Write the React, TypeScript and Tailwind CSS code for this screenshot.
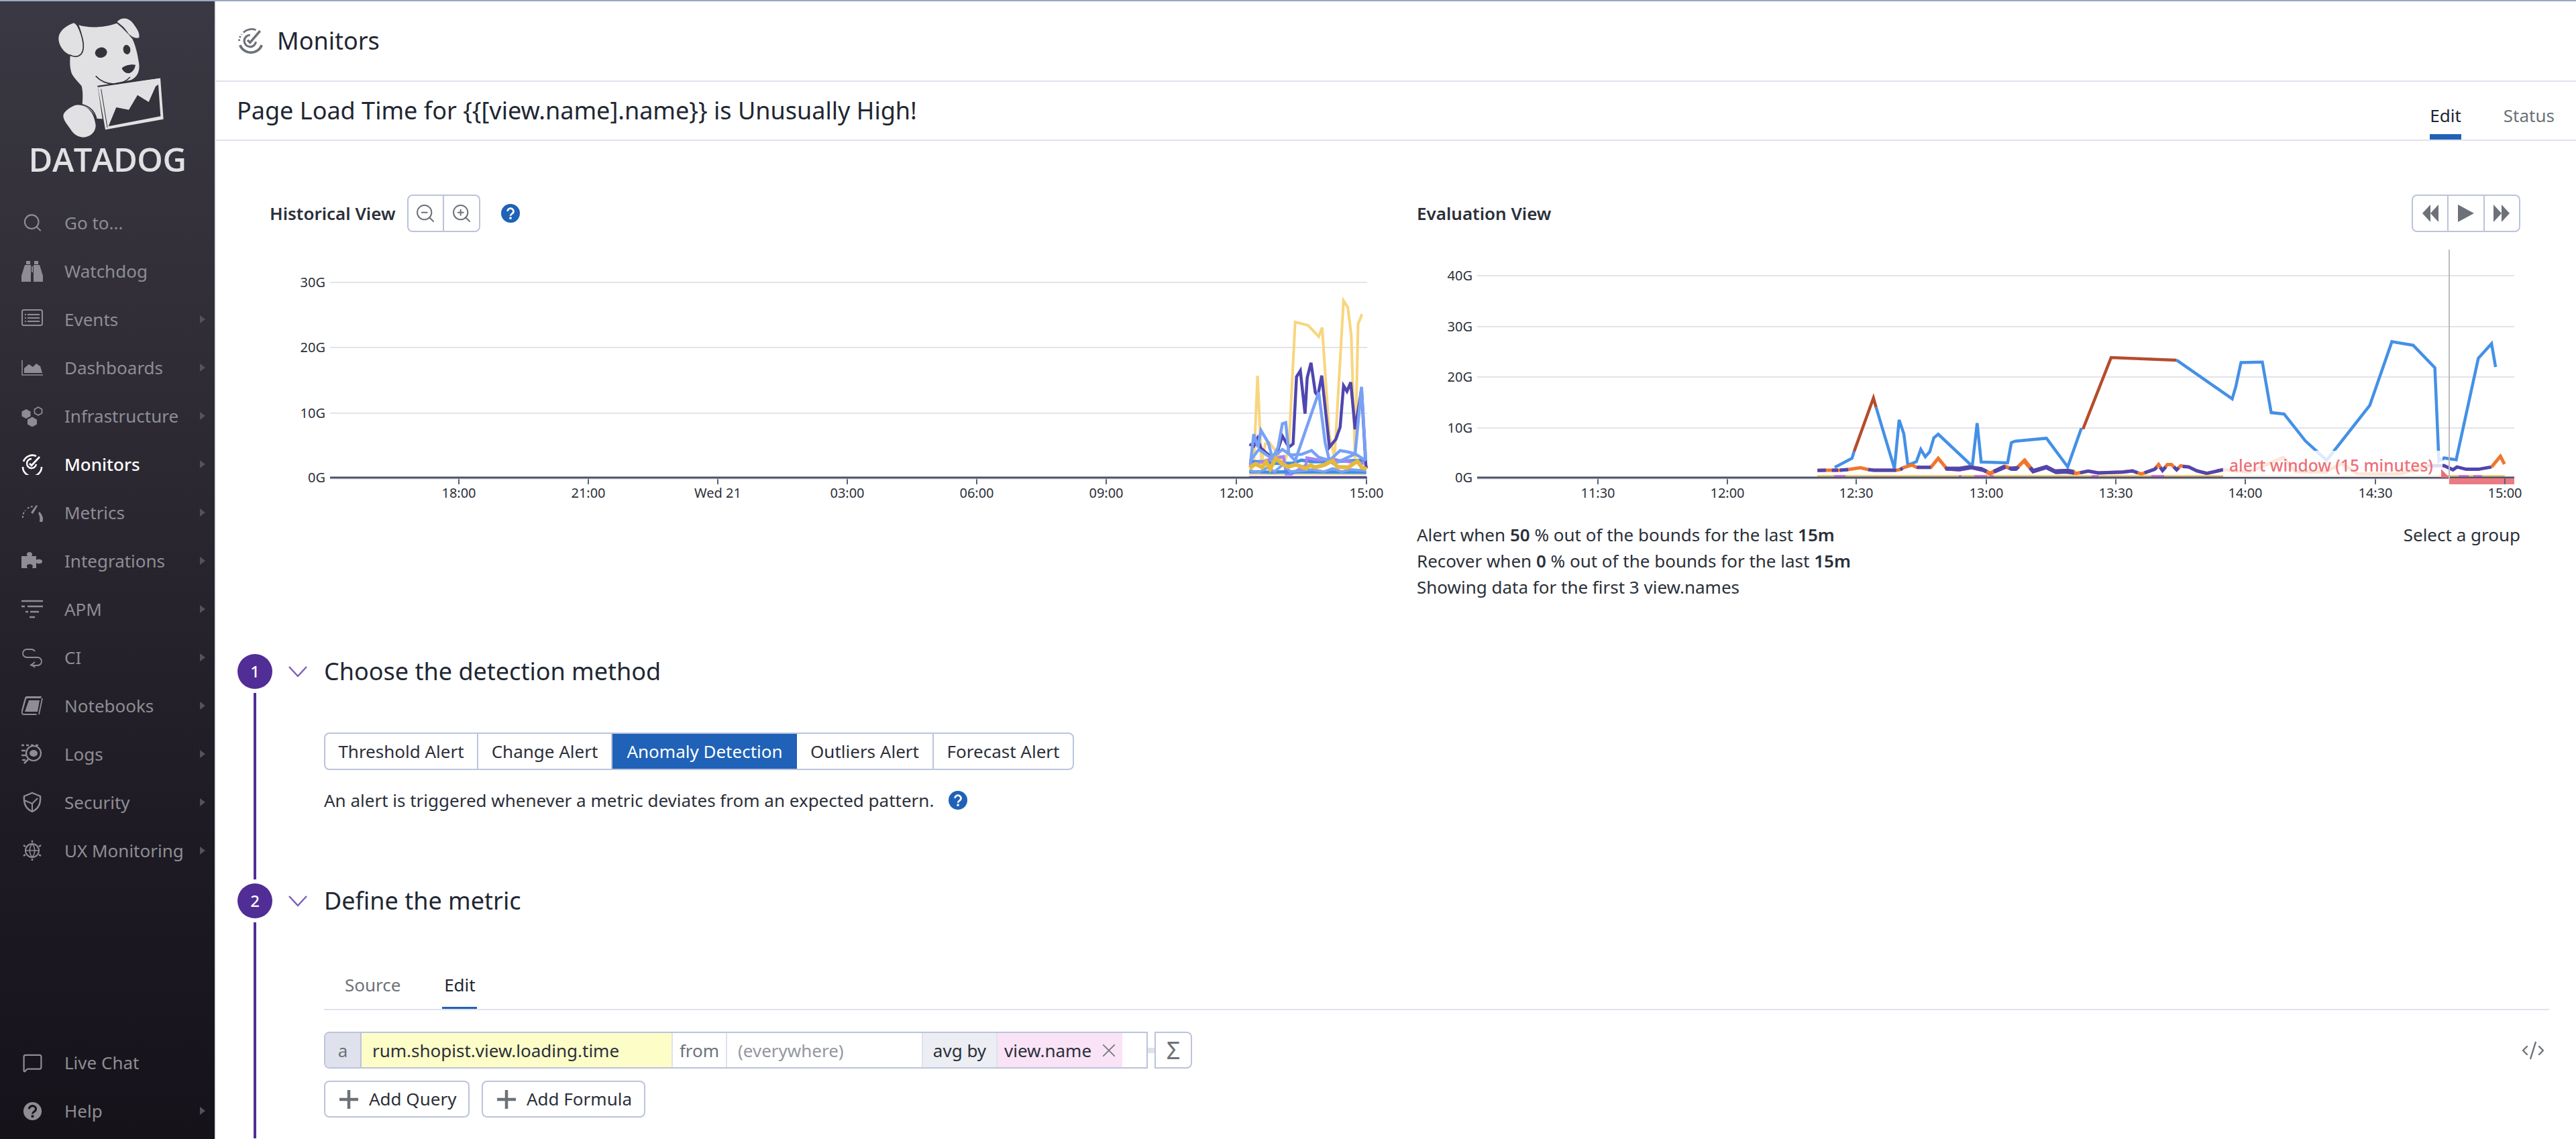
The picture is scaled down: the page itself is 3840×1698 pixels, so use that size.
import React from "react";
import { Search, ZoomIn, ZoomOut, Code2, MessageSquare } from "lucide-react";

type P = [number, number];
const z4 = (p: P[]) => p.map(([x, y]) => `${(1800 + x / 1.568).toFixed(1)},${(400 + y / 3).toFixed(1)}`).join(" ");
const z6 = (p: P[]) => p.map(([x, y]) => `${(1800 + x / 3).toFixed(1)},${(560 + y / 3).toFixed(1)}`).join(" ");
const z5 = (p: P[]) => p.map(([x, y]) => `${(2900 + x / 1.668).toFixed(1)},${(270 + y / 2.84).toFixed(1)}`).join(" ");
const z11 = (p: P[]) => p.map(([x, y]) => `${(2600 + x / 3).toFixed(1)},${(480 + y / 3).toFixed(1)}`).join(" ");

const Icon = ({ children }: { children: React.ReactNode }) => (
  <svg viewBox="0 0 32 32" width="32" height="32" fill="none" stroke="currentColor" strokeWidth="2">{children}</svg>
);

const icons: Record<string, React.ReactNode> = {
  goto: <Search size={32} strokeWidth={1.6} className="ml-[1px]" />,
  watchdog: (
    <Icon>
      <path fill="currentColor" stroke="none" d="M7 1h6v5H7zM19 1h6v5h-6zM5 7h9v25H0v-9zM18 7h9l5 16v9H18zM15 9h2v9h-2z" />
    </Icon>
  ),
  events: (
    <Icon>
      <rect x="1" y="2" width="30" height="23" rx="2.5" />
      <path d="M5 9h2M5 14h2M5 19h2M9 9h18M9 14h18M9 19h18" strokeWidth="1.8" />
    </Icon>
  ),
  dashboards: (
    <Icon>
      <path d="M1 5v22h31" strokeWidth="1.5" />
      <path fill="currentColor" stroke="none" d="M4 24v-7l7-6 6 4 5-5 6 4 3 10z" />
    </Icon>
  ),
  infra: (
    <Icon>
      <path fill="currentColor" stroke="none" d="M7 6l6.5 3.5v7L7 20 .5 16.5v-7zM16 17.5l7 4v7l-7 4-7-4v-7z" />
      <path d="M25 3l5.5 3v6L25 15l-5.5-3V6z" strokeWidth="1.7" />
    </Icon>
  ),
  monitors: (
    <Icon>
      <path d="M2 20A14 14 0 0 0 30 20" strokeWidth="2.6" />
      <path d="M3 12A14 14 0 0 1 22 4" strokeWidth="2.6" />
      <path d="M22 16a7 7 0 1 1-7-8" strokeWidth="2.4" />
      <path d="M12 15l3 3L27 5" strokeWidth="2.8" />
    </Icon>
  ),
  metrics: (
    <Icon>
      <path d="M2 24a14 14 0 0 1 4-11M9 10a14 14 0 0 1 8-3" strokeDasharray="3 2.4" strokeWidth="2" />
      <path fill="currentColor" stroke="none" d="M22 5l2 1-7 12-3-2zM27 15c3 3 5 7 5 11 0 1 0 3-1 4h-4c1-5 0-10-2-13z" />
    </Icon>
  ),
  integrations: (
    <Icon>
      <path fill="currentColor" stroke="none" d="M0 9h9c-2-2-1-6 3-6s5 4 3 6h7v6c2-2 9-2 9 2s-7 4-9 2v8h-6c2-4 0-6-4-6s-5 3-3 6H0z" />
    </Icon>
  ),
  apm: (
    <Icon>
      <path d="M0 4h32M0 12h5M9 12h23M6 20h4M13 20h13M12 28h8" strokeWidth="2.4" />
    </Icon>
  ),
  ci: (
    <Icon>
      <path d="M14 16H8a6 6 0 1 1 0-12h7a6 6 0 0 1 5 3M13 16h11a6 6 0 1 1 0 12H15l-2-1" strokeWidth="1.8" />
      <path d="M20 23l-5 4 5 4" strokeWidth="1.8" />
    </Icon>
  ),
  notebooks: (
    <Icon>
      <path fill="currentColor" stroke="none" d="M7 2h23l-1 3H9c-1 0-2 0-3 5L2 24c-1 3 0 4 2 4h18l1 2H4c-4 0-5-3-4-7L4 8c1-4 2-6 3-6zM11 8h16l-3 17H5z" />
      <path d="M31 5l-5 24" strokeWidth="1.8" />
    </Icon>
  ),
  logs: (
    <Icon>
      <path d="M0 3h4M7 3h4M14 3h4M21 3h4M0 11h6M0 18h7M1 25h5" strokeWidth="2.4" />
      <circle cx="18" cy="15" r="11" strokeWidth="2.2" />
      <ellipse cx="18" cy="15" rx="6" ry="5" fill="currentColor" stroke="none" />
      <path d="M10 24l-6 6" strokeWidth="2.6" />
    </Icon>
  ),
  security: (
    <Icon>
      <path d="M16 2l12 5c1 11-3 19-12 23C7 26 3 18 4 7z" strokeWidth="2.4" />
      <path d="M4 13l12 5 8-8M16 18v11" strokeWidth="2" />
    </Icon>
  ),
  ux: (
    <Icon>
      <circle cx="16" cy="16" r="10" strokeWidth="2" />
      <path d="M6 16h20M16 6c-5 6-5 14 0 20M16 6c5 6 5 14 0 20" strokeWidth="1.6" />
      <path d="M16 1v3M16 28v3M3 8l3 2M26 22l3 2M3 24l3-2M26 10l3-2" strokeWidth="2.4" />
    </Icon>
  ),
  chat: <MessageSquare size={33} strokeWidth={1.7} className="ml-[1px]" />,
  help: (
    <svg viewBox="0 0 32 32" width="29" height="29" className="ml-[1px]">
      <circle cx="16" cy="16" r="15" fill="currentColor" />
      <path d="M10.5 12.5a5.5 5 0 1 1 8.5 4c-2 1.3-3 2-3 4" fill="none" stroke="#17141c" strokeWidth="3.4" />
      <rect x="14" y="22.5" width="4" height="4" fill="#17141c" />
    </svg>
  ),
};

const NavRow = ({ icon, label, active, arrow = true }: { icon: string; label: string; active?: boolean; arrow?: boolean }) => (
  <div className={`flex h-[72px] items-center pl-[32px] pr-[14px] ${active ? "text-white" : "text-[#8f8d94]"}`}>
    <span className="flex h-[32px] w-[32px] shrink-0 items-center justify-center">{icons[icon]}</span>
    <span className={`ml-[32px] flex-1 text-[26px] leading-none ${active ? "font-medium" : ""}`}>{label}</span>
    {arrow && <span className="h-0 w-0 border-y-[6px] border-l-[8px] border-y-transparent border-l-[#55525c]" />}
  </div>
);

const Logo = () => (
  <svg viewBox="0 6 960 630" width="320" height="210" className="block shrink-0">
    <g fill="#e1e1e3">
      <path d="M262 172C262 142 292 116 330 103C350 112 364 150 374 192C378 226 362 246 336 250C300 252 262 212 262 172Z" />
      <path d="M525 96C545 76 576 78 596 106C614 130 626 150 622 168C610 174 590 166 574 150C560 126 542 110 525 100Z" />
      <path d="M352 112C400 128 470 122 522 104C550 126 572 150 592 174C610 212 616 250 622 286C626 322 612 346 586 358L437 386L458 532L432 530C418 500 395 480 368 470C370 440 372 415 365 385C345 360 322 340 318 320C312 300 312 275 314 250C350 255 382 225 372 180C365 150 360 130 352 112Z" />
      <path d="M345 468C385 470 420 495 428 560C428 590 405 612 372 614C345 612 330 600 318 582C305 560 282 540 283 515C288 495 320 475 345 468Z" />
      <path d="M438 390L717 349L731 533L471 580Z" />
    </g>
    <g fill="#34323b">
      <ellipse cx="452" cy="235" rx="27" ry="23" transform="rotate(-15 452 235)" />
      <ellipse cx="567" cy="222" rx="16" ry="21" transform="rotate(-10 567 222)" />
      <path d="M545 305C555 292 590 285 606 290C602 315 585 330 570 327C558 325 548 315 545 305Z" />
      <path d="M485 565L718 520L708 378L696 386L665 456L615 425L576 491L520 480Z" />
    </g>
    <g fill="none" stroke="#34323b" strokeWidth="5">
      <path d="M428 340C470 384 540 388 582 345" />
      <path d="M345 110C372 165 388 232 352 250C338 256 322 252 312 245" />
      <path d="M340 467C385 462 424 490 432 535" />
      <path d="M452 398L480 570" strokeWidth="3" />
      <path d="M436 385L716 347" strokeWidth="4" />
    </g>
  </svg>
);

const Question = ({ className = "" }: { className?: string }) => (
  <svg viewBox="0 0 28 28" width="28" height="28" className={className}>
    <circle cx="14" cy="14" r="14" fill="#1f62b7" />
    <path d="M9.5 11a4.5 4.2 0 1 1 7 3.4c-1.7 1.1-2.5 1.7-2.5 3.4" fill="none" stroke="#fff" strokeWidth="2.8" />
    <rect x="12.4" y="19.5" width="3.2" height="3.2" fill="#fff" />
  </svg>
);

const AddPlus = () => (
  <svg viewBox="0 0 28 28" width="28" height="28" stroke="#6d7278" strokeWidth="4.5"><path d="M14 0V28M0 14H28" /></svg>
);

const AxisText = ({ x, y, anchor = "middle", children }: { x: number; y: number; anchor?: "middle" | "end"; children: string }) => (
  <text x={x} y={y + 7} textAnchor={anchor} fontSize="20" fill="#2b3039" fontFamily="'Noto Sans', sans-serif">{children}</text>
);

const Grid = ({ x1, x2, rows, ticks }: { x1: number; x2: number; rows: [string, number][]; ticks: [string, number][] }) => (
  <g>
    {rows.map(([l, y]) => (
      <React.Fragment key={l}>
        <line x1={x1} x2={x2} y1={y} y2={y} stroke="#e3e4ea" strokeWidth="2" />
        <AxisText x={x1 - 7} y={y} anchor="end">{l}</AxisText>
      </React.Fragment>
    ))}
    <AxisText x={x1 - 7} y={712} anchor="end">0G</AxisText>
    {ticks.map(([l, x]) => (
      <React.Fragment key={l}>
        <line x1={x} x2={x} y1={712} y2={722} stroke="#5d6273" strokeWidth="2" />
        <AxisText x={x} y={735}>{l}</AxisText>
      </React.Fragment>
    ))}
    <line x1={x1} x2={x2} y1={714} y2={714} stroke="#d5d8e4" strokeWidth="1" />
  </g>
);

const HistoricalChart = () => (
  <svg viewBox="402 346 1680 414" width="1680" height="414" className="block" fill="none">
    <Grid
      x1={492}
      x2={2038}
      rows={[["30G", 421], ["20G", 518], ["10G", 616]]}
      ticks={[["18:00", 684], ["21:00", 877], ["Wed 21", 1070], ["03:00", 1263], ["06:00", 1456], ["09:00", 1649], ["12:00", 1843], ["15:00", 2037]]}
    />
    <polyline stroke="#f8d57e" strokeWidth="4" points={z4([[100, 905], [108, 880], [117, 480], [126, 875], [135, 785], [145, 780], [180, 870], [190, 800], [205, 240], [235, 255], [260, 305], [268, 265], [285, 750], [297, 845], [318, 145], [328, 175], [336, 300], [345, 850], [352, 250], [361, 205]])} />
    <polyline stroke="#f8d57e" strokeWidth="4" points={z6([[187, 438], [710, 438]])} />
    <polyline stroke="#3f8fe5" strokeWidth="5" points={z6([[187, 385], [240, 385], [300, 392], [380, 392], [420, 378], [470, 385], [560, 385], [700, 378]])} />
    <polyline stroke="#a384f5" strokeWidth="4.5" points={z6([[187, 400], [300, 370], [340, 362], [352, 440], [375, 440], [440, 400], [445, 368], [500, 378], [560, 372], [590, 380], [700, 392]])} />
    <polyline stroke="#4f46b0" strokeWidth="4.5" points={z4([[98, 787], [108, 795], [117, 760], [125, 805], [140, 830], [152, 845], [165, 810], [175, 750], [190, 800], [200, 785], [208, 485], [217, 458], [228, 650], [233, 490], [242, 422], [252, 555], [258, 570], [267, 480], [285, 800], [300, 765], [310, 710], [318, 525], [326, 550], [335, 510], [345, 720], [360, 540], [370, 880], [372, 895]])} />
    <polyline stroke="#78a1f5" strokeWidth="4.5" points={z4([[100, 880], [108, 742], [118, 800], [125, 725], [142, 780], [152, 850], [165, 800], [175, 695], [183, 690], [190, 830], [205, 860], [260, 555], [275, 780], [285, 860], [295, 875], [345, 830], [360, 530], [370, 860]])} />
    <polyline stroke="#78a1f5" strokeWidth="4.5" points={z4([[100, 860], [120, 810], [150, 850], [175, 810], [195, 835], [220, 832], [243, 815], [260, 845], [285, 860], [310, 815], [330, 822], [345, 830], [370, 860]])} />
    <polyline stroke="#3f8fe5" strokeWidth="5" points={z6([[187, 430], [290, 432], [350, 430], [710, 432]])} />
    <polyline stroke="#78a1f5" strokeWidth="4" points={z6([[187, 425], [230, 432], [270, 410], [300, 430], [340, 395], [370, 430], [420, 425], [470, 420], [520, 430], [560, 415], [600, 430], [640, 420], [710, 425]])} />
    <polyline stroke="#e6b93c" strokeWidth="6" points={z6([[187, 412], [215, 395], [245, 410], [262, 385], [280, 418], [305, 370], [335, 395], [360, 408], [395, 398], [440, 415], [460, 400], [480, 410], [520, 400], [560, 380], [580, 408], [630, 410], [670, 382], [690, 410], [712, 418]])} />
    <line x1={492} x2={2038} y1={712} y2={712} stroke="#4f5468" strokeWidth="3" />
    <polyline stroke="#4f46b0" strokeWidth="2" points={z6([[187, 452], [710, 452]])} />
  </svg>
);

const EvaluationChart = () => (
  <svg viewBox="2112 346 1678 432" width="1678" height="432" className="block" fill="none">
    <Grid
      x1={2202}
      x2={3748}
      rows={[["40G", 411], ["30G", 487], ["20G", 562], ["10G", 638]]}
      ticks={[["11:30", 2382], ["12:00", 2575], ["12:30", 2767], ["13:00", 2961], ["13:30", 3154], ["14:00", 3347], ["14:30", 3541], ["15:00", 3734]]}
    />
    <polyline stroke="#4490e6" strokeWidth="4.5" points={z11([[405, 650], [482, 610], [492, 578]])} />
    <polyline stroke="#b54c2d" strokeWidth="4.5" points={z11([[492, 578], [578, 340], [590, 382]])} />
    <polyline stroke="#4490e6" strokeWidth="4.5" points={z11([[590, 382], [672, 655], [693, 438], [714, 500], [732, 640], [770, 625], [790, 570], [810, 603], [830, 580], [848, 518], [868, 502], [1020, 645], [1042, 452], [1060, 626], [1178, 630], [1195, 540], [1212, 533], [1352, 520], [1447, 648], [1508, 475]])} />
    <polyline stroke="#b54c2d" strokeWidth="4.5" points={z5([[342, 1050], [412, 747], [575, 758]])} />
    <polyline stroke="#4490e6" strokeWidth="4.5" points={z5([[575, 758], [713, 922], [722, 870], [735, 768], [788, 766], [810, 980], [842, 986], [895, 1100], [948, 1182], [1055, 950], [1110, 680], [1163, 695], [1217, 790], [1227, 1185], [1240, 1172], [1270, 1180], [1325, 750], [1358, 688], [1368, 787]])} />
    <polyline stroke="#f0762f" strokeWidth="5" points={z11([[328, 664], [365, 663], [425, 663], [465, 660], [520, 652], [555, 660], [580, 663], [680, 663], [700, 660], [710, 652], [750, 640], [772, 650], [835, 650], [868, 610], [905, 655], [965, 655], [1005, 648], [1060, 656], [1100, 676], [1165, 645], [1195, 655], [1220, 652], [1255, 618], [1292, 665], [1352, 647], [1390, 667], [1447, 664], [1480, 670]])} />
    <polyline stroke="#f0762f" strokeWidth="5" points={z5([[0, 1218], [35, 1222], [65, 1213], [95, 1225], [110, 1240], [150, 1210], [165, 1220], [175, 1220], [195, 1185], [218, 1230], [250, 1213], [275, 1233], [300, 1231], [325, 1237], [355, 1228], [380, 1235], [440, 1232], [465, 1227], [487, 1240], [520, 1220], [530, 1200], [540, 1225], [552, 1200], [562, 1200], [575, 1222], [585, 1205], [605, 1210], [625, 1227], [650, 1237], [690, 1222], [755, 1232], [840, 1170], [870, 1230], [945, 1232], [985, 1195], [1025, 1240], [1075, 1240], [1130, 1240], [1200, 1205], [1240, 1205]])} />
    <g stroke="#4f46b0" strokeWidth="5">
      <polyline points={z11([[328, 664], [365, 663]])} />
      <polyline points={z11([[392, 663], [420, 663]])} />
      <polyline points={z11([[428, 663], [465, 660]])} />
      <polyline points={z11([[555, 660], [580, 663], [680, 663]])} />
      <polyline points={z11([[698, 661], [708, 653]])} />
      <polyline points={z11([[772, 650], [835, 650]])} />
      <polyline points={z11([[900, 650], [905, 655], [965, 655], [1005, 648], [1060, 656], [1085, 668]])} />
      <polyline points={z11([[1115, 668], [1165, 645]])} />
      <polyline points={z11([[1190, 650], [1195, 655], [1220, 652]])} />
      <polyline points={z11([[1280, 650], [1292, 665], [1352, 647], [1390, 667], [1447, 664], [1472, 669]])} />
      <polyline points={z5([[0, 1218], [35, 1222], [65, 1213], [95, 1225], [100, 1229]])} />
      <polyline points={z5([[122, 1230], [150, 1210]])} />
      <polyline points={z5([[158, 1214], [165, 1220], [175, 1220], [182, 1210]])} />
      <polyline points={z5([[210, 1215], [218, 1230], [250, 1213], [275, 1233], [300, 1231], [320, 1236]])} />
      <polyline points={z5([[335, 1235], [355, 1228], [380, 1235], [440, 1232], [465, 1227], [478, 1235]])} />
      <polyline points={z5([[495, 1235], [520, 1220], [526, 1212]])} />
      <polyline points={z5([[534, 1212], [540, 1225], [548, 1210]])} />
      <polyline points={z5([[568, 1210], [575, 1222], [580, 1214]])} />
      <polyline points={z5([[590, 1208], [605, 1210], [625, 1227], [650, 1237], [690, 1222]])} />
      <polyline points={z5([[1200, 1205], [1240, 1205], [1262, 1222], [1272, 1210], [1295, 1220], [1325, 1220], [1358, 1210]])} />
    </g>
    <polyline stroke="#f0762f" strokeWidth="5" points={z5([[1358, 1210], [1380, 1165], [1390, 1198]])} />
    <line x1={2709} x2={3734} y1={709.5} y2={709.5} stroke="#eeb93a" strokeWidth="2" />
    <g stroke="#d946ef" strokeWidth="2">
      <line x1={2734} x2={2751} y1={709.5} y2={709.5} />
      <line x1={2920} x2={2924} y1={709.5} y2={709.5} />
      <line x1={2943} x2={2962} y1={709.5} y2={709.5} />
      <line x1={2966} x2={2972} y1={709.5} y2={709.5} />
      <line x1={3118} x2={3128} y1={709.5} y2={709.5} />
      <line x1={3207} x2={3226} y1={709.5} y2={709.5} />
      <line x1={3665} x2={3680} y1={709.5} y2={709.5} />
      <line x1={3687} x2={3700} y1={709.5} y2={709.5} />
    </g>
    <line x1={2202} x2={3748} y1={712} y2={712} stroke="#4f5468" strokeWidth="3" />
    <rect x={3314} y={672} width={327} height={39} fill="#fff" fillOpacity="0.82" />
    <rect x={3651} y={713} width={97} height={9} fill="#ea7a83" />
    <polygon points="3639,699 3651,712 3639,712" fill="#ea6f78" />
    <line x1={3651} x2={3651} y1={372} y2={714} stroke="#bcbcc0" strokeWidth="2" />
    <line x1={3734} x2={3734} y1={712} y2={722} stroke="#5d6273" strokeWidth="2" />
    <text x={3323} y={703} fontSize="24.5" fontWeight="500" fill="#ec6f78" fontFamily="'Noto Sans', sans-serif">alert window (15 minutes)</text>
  </svg>
);

const Step = ({ n, title, line, height, children }: { n: number; title: string; line: string; height: string; children: React.ReactNode }) => (
  <div className={`flex ${height} pl-[32px]`}>
    <div className="flex w-[52px] shrink-0 flex-col items-center">
      <div className="flex h-[52px] w-[52px] items-center justify-center rounded-full bg-[#512d96] text-[24px] font-medium text-white">{n}</div>
      <div className={`w-[4px] flex-1 bg-[#512d96] ${line}`} />
    </div>
    <div className="min-w-0 flex-1">
      <div className="flex h-[52px] items-center">
        <svg viewBox="0 0 28 17" width="28" height="17" fill="none" stroke="#7b5fb5" strokeWidth="2.4" className="ml-[24px]"><path d="M1 1L14 15L27 1" /></svg>
        <span className="ml-[25px] text-[36px] leading-none text-[#1f2733]">{title}</span>
      </div>
      <div className="pl-[77px] pr-[40px]">{children}</div>
    </div>
  </div>
);

const MethodButton = ({ label, active, w }: { label: string; active?: boolean; w: string }) => (
  <div className={`flex h-full items-center justify-center text-[26px] ${w} ${active ? "bg-[#1f62b7] text-white" : "border-r-2 border-[#bcc3db] text-[#2b3039] last:border-r-0"}`}>{label}</div>
);

export default function App() {
  const nav: [string, string, boolean?, boolean?][] = [
    ["goto", "Go to...", false, false],
    ["watchdog", "Watchdog", false, false],
    ["events", "Events"],
    ["dashboards", "Dashboards"],
    ["infra", "Infrastructure"],
    ["monitors", "Monitors", true],
    ["metrics", "Metrics"],
    ["integrations", "Integrations"],
    ["apm", "APM"],
    ["ci", "CI"],
    ["notebooks", "Notebooks"],
    ["logs", "Logs"],
    ["security", "Security"],
    ["ux", "UX Monitoring"],
  ];
  return (
    <div className="flex h-[1698px] w-[3840px] flex-col overflow-hidden bg-white font-['Noto_Sans',sans-serif] text-[#2b3039]">
      <div className="h-[2px] shrink-0 bg-[#9aa9c2]" />
      <div className="flex min-h-0 flex-1">
        <aside className="flex w-[322px] shrink-0 flex-col border-r-2 border-[#dfe2ec] bg-[linear-gradient(180deg,#3a3842_0%,#302d37_30%,#1e1b24_72%,#15121a_100%)]">
          <div className="h-[294px] shrink-0">
            <Logo />
            <div className="mt-[-3px] text-center font-['Open_Sans',sans-serif] text-[49px] font-semibold leading-[56px] tracking-[-0.5px] text-[#e1e1e3]">DATADOG</div>
          </div>
          {nav.map(([i, l, a, ar]) => (
            <NavRow key={l} icon={i} label={l} active={a} arrow={ar !== false} />
          ))}
          <div className="flex-1" />
          <NavRow icon="chat" label="Live Chat" arrow={false} />
          <NavRow icon="help" label="Help" />
          <div className="h-[6px] shrink-0" />
        </aside>

        <main className="flex min-w-0 flex-1 flex-col">
          <header className="flex h-[120px] shrink-0 items-center gap-[19px] border-b-2 border-[#dfe2ec] pl-[32px] text-[#6d7278]">
            <svg viewBox="0 0 32 32" width="40" height="40" fill="none" stroke="currentColor" strokeWidth="2.2">
              <path d="M3 21A14 14 0 0 0 29 21" strokeWidth="3" />
              <path d="M2 16A14 14 0 0 1 5 8" strokeDasharray="2 2" />
              <path d="M7 6A14 14 0 0 1 22 3" />
              <path d="M22 17a7 7 0 1 1-7-8" strokeWidth="2.6" />
              <path d="M12 15l3 3L27 4" strokeWidth="2.8" />
            </svg>
            <span className="text-[36px] leading-none text-[#1f2733]">Monitors</span>
          </header>
          <div className="flex h-[88px] shrink-0 items-center justify-between border-b-2 border-[#dfe2ec] pl-[31px] pr-[32px]">
            <h1 className="text-[36px] font-normal leading-none text-[#1f2733]">{"Page Load Time for {{[view.name].name}} is Unusually High!"}</h1>
            <div className="flex h-full items-end gap-[63px] text-[26px]">
              <div className="flex h-full flex-col justify-end">
                <span className="leading-[36px] text-[#1f2733]">Edit</span>
                <div className="mt-[10px] h-[8px] bg-[#1f62b7]" />
              </div>
              <div className="flex h-full flex-col justify-end">
                <span className="leading-[36px] text-[#6d7278]">Status</span>
                <div className="mt-[10px] h-[8px]" />
              </div>
            </div>
          </div>

          <div className="flex shrink-0 pt-[80px]">
            <div className="ml-[80px] w-[1710px] shrink-0">
              <div className="flex h-[56px] items-center">
                <span className="text-[26px] font-semibold">Historical View</span>
                <div className="ml-[17px] flex h-[56px] w-[109px] rounded-[8px] border-2 border-[#bcc3db] text-[#6d7278]">
                  <div className="flex flex-1 items-center justify-center border-r-2 border-[#bcc3db]"><ZoomOut size={32} strokeWidth={1.5} /></div>
                  <div className="flex flex-1 items-center justify-center"><ZoomIn size={32} strokeWidth={1.5} /></div>
                </div>
                <Question className="ml-[31px]" />
              </div>
              <HistoricalChart />
            </div>
            <div className="w-[1678px] shrink-0">
              <div className="flex h-[56px] items-center justify-between pr-[33px]">
                <span className="text-[26px] font-semibold">Evaluation View</span>
                <div className="flex h-[56px] w-[162px] rounded-[8px] border-2 border-[#bcc3db] text-[#6d7278]">
                  <div className="flex flex-1 items-center justify-center border-r-2 border-[#bcc3db]">
                    <svg viewBox="0 0 24 26" width="24" height="26" fill="currentColor"><path d="M0 13L12 0V26ZM12 13L24 0V26Z" /></svg>
                  </div>
                  <div className="flex flex-1 items-center justify-center border-r-2 border-[#bcc3db]">
                    <svg viewBox="0 0 24 26" width="24" height="26" fill="currentColor"><path d="M0 0L24 13L0 26Z" /></svg>
                  </div>
                  <div className="flex flex-1 items-center justify-center">
                    <svg viewBox="0 0 24 26" width="24" height="26" fill="currentColor"><path d="M0 0L12 13L0 26ZM12 0L24 13L12 26Z" /></svg>
                  </div>
                </div>
              </div>
              <EvaluationChart />
              <div className="flex justify-between pr-[33px] text-[26px] leading-[39px]">
                <div>
                  <div>Alert when <b className="font-semibold">50</b> % out of the bounds for the last <b className="font-semibold">15m</b></div>
                  <div>Recover when <b className="font-semibold">0</b> % out of the bounds for the last <b className="font-semibold">15m</b></div>
                  <div>Showing data for the first 3 view.names</div>
                </div>
                <div>Select a group</div>
              </div>
            </div>
          </div>

          <div className="mt-[80px] min-h-0 flex-1">
            <Step n={1} title="Choose the detection method" line="mb-[6px] mt-[6px]" height="h-[342px]">
              <div className="mt-[65px] flex h-[56px] w-[1118px] overflow-hidden rounded-[8px] border-2 border-[#bcc3db]">
                <MethodButton label="Threshold Alert" w="w-[228px]" />
                <MethodButton label="Change Alert" w="w-[200px]" />
                <MethodButton label="Anomaly Detection" active w="w-[275px]" />
                <MethodButton label="Outliers Alert" w="w-[204px]" />
                <MethodButton label="Forecast Alert" w="w-[207px]" />
              </div>
              <div className="mt-[25px] flex h-[40px] items-center text-[26px]">
                An alert is triggered whenever a metric deviates from an expected pattern.
                <Question className="ml-[22px]" />
              </div>
            </Step>
            <Step n={2} title="Define the metric" line="mt-[6px]" height="h-[380px]">
              <div className="mt-[70px] flex h-[67px] gap-[62px] border-b-2 border-[#dfe2ec] pl-[31px] text-[26px]">
                <span className="pt-[11px] leading-[36px] text-[#6d7278]">Source</span>
                <div className="flex w-[52px] flex-col items-center">
                  <span className="pt-[11px] leading-[36px] text-[#1f2733]">Edit</span>
                  <div className="mt-[15px] h-[7px] w-full bg-[#1f62b7]" />
                </div>
              </div>
              <div className="mt-[32px] flex items-center justify-between">
                <div className="flex items-center">
                  <div className="flex h-[55px] w-[1228px] overflow-hidden rounded-l-[8px] border-2 border-[#bcc3db] text-[26px] leading-none">
                    <span className="flex w-[54px] items-center justify-center border-r-2 border-[#bcc3db] bg-[#dfe2ec] text-[#6d7278]">a</span>
                    <span className="flex w-[462px] items-center bg-[#fdfdc8] pl-[16px]">rum.shopist.view.loading.time</span>
                    <span className="flex w-[83px] items-center justify-center border-x-2 border-[#dfe2ec] text-[#6d7278]">from</span>
                    <span className="flex w-[290px] items-center pl-[16px] text-[#9497a0]">(everywhere)</span>
                    <span className="flex w-[113px] items-center justify-center border-x-2 border-[#dfe2ec] bg-[#eceef3]">avg by</span>
                    <span className="flex w-[186px] items-center gap-[17px] bg-[#fae3f6] pl-[10px]">
                      view.name
                      <svg viewBox="0 0 18 18" width="18" height="18" stroke="#6d7278" strokeWidth="1.6"><path d="M0 0L18 18M18 0L0 18" /></svg>
                    </span>
                  </div>
                  <div className="h-[8px] w-[10px] bg-[#dfe2ec]" />
                  <div className="flex h-[55px] w-[56px] items-center justify-center rounded-r-[8px] border-2 border-[#bcc3db] text-[36px] text-[#6d7278]">Σ</div>
                </div>
                <Code2 size={36} strokeWidth={1.6} className="mr-[6px] text-[#6d7278]" />
              </div>
              <div className="mt-[18px] flex gap-[18px] text-[26px]">
                <div className="flex h-[55px] w-[217px] items-center gap-[16px] rounded-[8px] border-2 border-[#bcc3db] pl-[21px]"><AddPlus />Add Query</div>
                <div className="flex h-[55px] w-[244px] items-center gap-[16px] rounded-[8px] border-2 border-[#bcc3db] pl-[21px]"><AddPlus />Add Formula</div>
              </div>
            </Step>
          </div>
        </main>
      </div>
    </div>
  );
}
